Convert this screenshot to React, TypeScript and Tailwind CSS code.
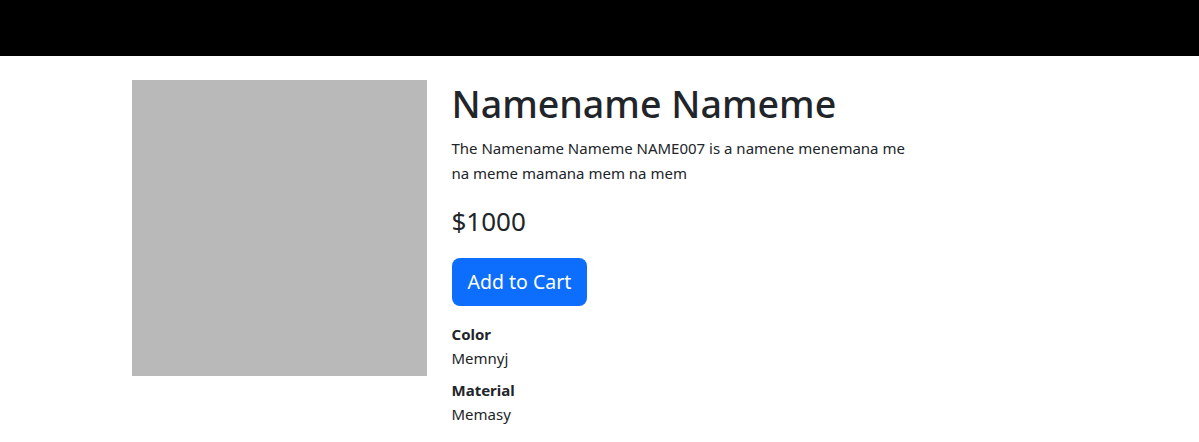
import React from "react";

export default function App() {
  return (
    <div className="min-h-screen bg-white text-[#212529]" style={{ fontFamily: '"Noto Sans", "Open Sans", sans-serif' }}>
      <div className="h-14 w-full bg-black" />
      <div className="mx-auto mt-6 w-[960px] px-3">
        <div className="-mx-3 flex">
          <div className="w-[320px] px-3">
            <div className="h-[296px] w-[295px] bg-[#b9b9b9]" />
          </div>
          <div className="w-[480px] px-3">
            <h1 className="mb-2 text-[37.6px] font-medium leading-[48px]">Namename Nameme</h1>
            <p className="mb-4 text-[15px] leading-[25px]">
              The Namename Nameme NAME007 is a namene menemana me na meme mamana mem na mem
            </p>
            <p className="mb-[18px] text-[26px] leading-[38px]">$1000</p>
            <button className="h-12 rounded-lg bg-[#0d6efd] px-4 text-[19.5px] leading-[30px] text-white">
              Add to Cart
            </button>
            <div className="mt-4">
              <div className="mb-2">
                <div className="text-[15px] font-bold leading-6">Color</div>
                <div className="text-[15px] leading-6">Memnyj</div>
              </div>
              <div className="mb-2">
                <div className="text-[15px] font-bold leading-6">Material</div>
                <div className="text-[15px] leading-6">Memasy</div>
              </div>
            </div>
          </div>
        </div>
      </div>
    </div>
  );
}
